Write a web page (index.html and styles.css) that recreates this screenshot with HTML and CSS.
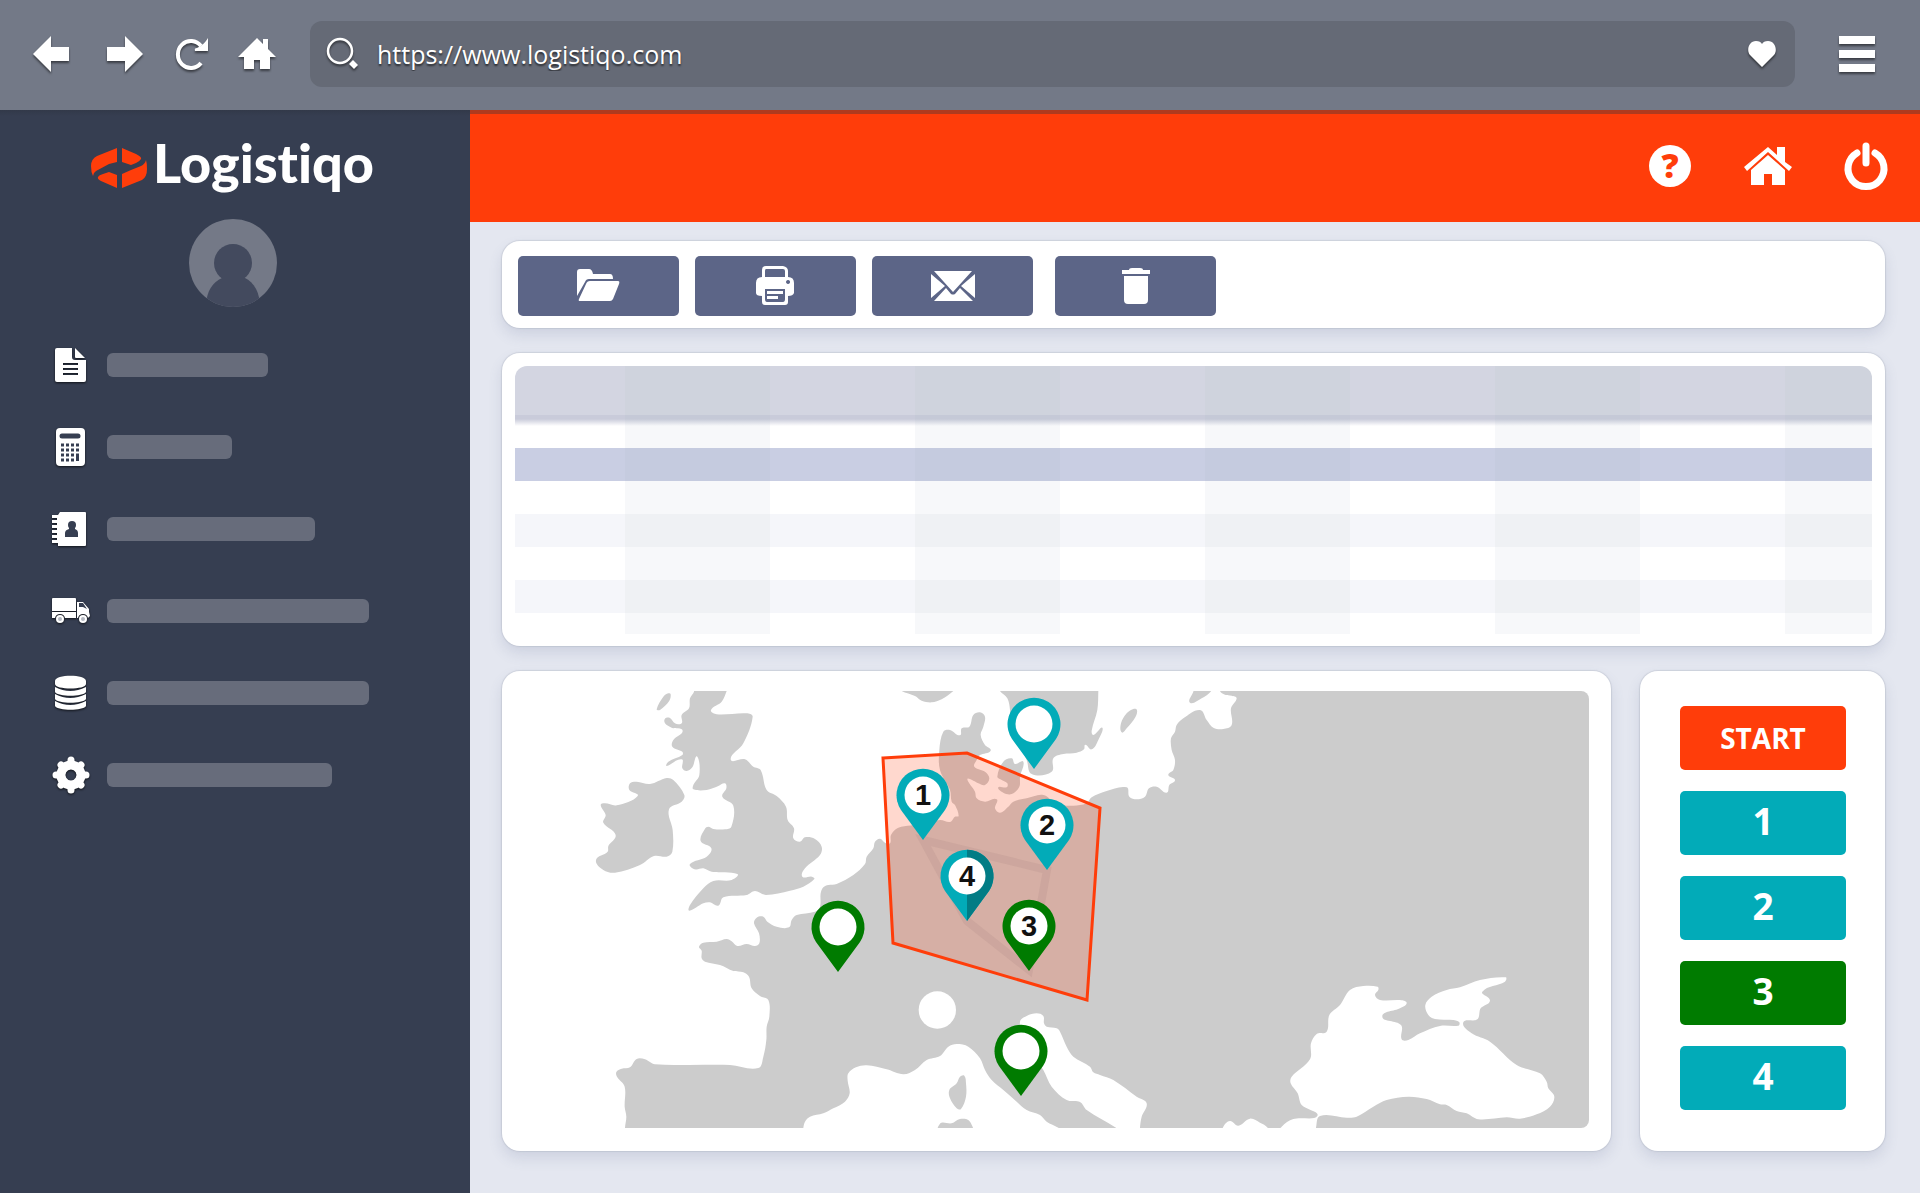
FILE: index.html
```
<!DOCTYPE html>
<html lang="en">
<head>
    <meta charset="UTF-8">
    <meta name="viewport" content="width=device-width, initial-scale=1.0">
    <title>Logistiqo</title>
    <link rel="stylesheet" href="styles.css">
</head>
<body>
    <header class="browser">
        <button class="browser-btn" aria-label="Back"><svg width="36" height="36" viewBox="0 0 36 36"><path d="M0 18L18 0V11H36V25H18V36Z"/></svg></button>
        <button class="browser-btn forward" aria-label="Forward"><svg width="36" height="36" viewBox="0 0 36 36"><path d="M36 18L18 0V11H0V25H18V36Z"/></svg></button>
        <button class="browser-btn" aria-label="Reload"><svg width="32" height="32" viewBox="0 0 32 32"><path d="M25 25A13 13.500 0 1 1 25 8" fill="none" stroke="#fff" stroke-width="4"/><path d="M32 0V13H19Q18 10 21 10Q28 7 32 0Z"/></svg></button>
        <button class="browser-btn start-page" aria-label="Start page"><svg width="38" height="32" viewBox="0 0 38 32"><path d="M19 0L25 6V1H30V11L38 19H32V31H22V22H16V31H6V19H0Z"/></svg></button>
        <form class="address">
            <svg width="32" height="32" viewBox="0 0 32 32"><circle cx="13" cy="13" r="12" fill="none" stroke="#fff" stroke-width="2.500"/><path d="M22 26L26 22L31 27L27 31Z"/></svg>
            <input type="text" name="url" aria-label="Address" value="https://www.logistiqo.com">
            <button class="browser-btn" type="button" aria-label="Favourite"><svg width="28" height="26" viewBox="0 0 28 26"><path d="M14 26L2 14C-2 9 1 0 8 0C11 0 13 1 14 3C15 1 17 0 20 0C27 0 30 9 26 14Z"/></svg></button>
        </form>
        <button class="browser-btn" aria-label="Menu"><svg width="36" height="36" viewBox="0 0 36 36"><path d="M0 0H36V8H0ZM0 14H36V22H0ZM0 28H36V36H0Z"/></svg></button>
    </header>

    <div class="app">
        <aside class="sidebar">
            <a class="logo" href="#">
                <svg width="56" height="40" viewBox="0 0 56 40">
                    <path d="M26 0V14L18 16L5 23Q2 25 2 28Q0 24 0 18Q0 11 6 8Z"/>
                    <path d="M31 0L45 6Q51 9 50 11Q49 13 45 15L40 17L31 14Z"/>
                    <path d="M26 40L10 33Q6 31 7 29Q8 27 12 26L18 24L26 27Z"/>
                    <path d="M31 40V26L40 22L50 18Q54 16 55 12Q56 15 56 21Q56 29 51 32Z"/>
                </svg>
                <span>Logistiqo</span>
            </a>
            <svg class="avatar" width="88" height="88" viewBox="0 0 88 88">
                <clipPath id="round"><circle cx="44" cy="44" r="44"/></clipPath>
                <g clip-path="url(#round)">
                    <path fill="#747987" d="M0 0H88V88H0Z"/>
                    <circle cx="44" cy="44" r="19"/>
                    <path d="M17 88C17 72 24 63 33 59H56C64 63 71 72 71 88Z"/>
                </g>
            </svg>
            <nav class="nav">
                <a href="#" aria-label="Documents">
                    <svg width="38" height="40" viewBox="0 0 38 40"><path fill-rule="evenodd" d="M5 3H20V12Q20 15 23 15H34V35Q34 37 32 37H5Q3 37 3 35V5Q3 3 5 3ZM11 18V20H26V18ZM11 23V25H26V23ZM11 28V30H26V28Z"/><path d="M23 3L33 13H24Q23 13 23 12Z"/></svg>
                    <span class="bar w161"></span>
                </a>
                <a href="#" aria-label="Accounting">
                    <svg width="38" height="40" viewBox="0 0 38 40"><rect x="4" y="1" width="29" height="38" rx="4"/><path stroke="#363e51" stroke-width="5" stroke-linecap="round" d="M10 9H26"/><path stroke="#363e51" stroke-width="3" stroke-dasharray="3 2" d="M9 18H28M9 23H28M9 28H28M9 33H23"/><path stroke="#363e51" stroke-width="3" d="M25.500 27V34"/></svg>
                    <span class="bar w125"></span>
                </a>
                <a href="#" aria-label="Contacts">
                    <svg width="38" height="40" viewBox="0 0 38 40"><path d="M8 3H33Q34 3 34 4V36Q34 37 33 37H6V34H0V31H5V29H0V26H5V24H0V21H5V19H0V16H5V14H0V11H5V9H0V6H6Z"/><g fill="#363e51"><circle cx="20" cy="16" r="4"/><path d="M13 28V24Q13 21 17 20V18H23V20Q26 21 26 24V28Z"/></g></svg>
                    <span class="bar w208"></span>
                </a>
                <a href="#" aria-label="Transport">
                    <svg width="38" height="40" viewBox="0 0 38 40"><path d="M1 7H23Q24 7 24 8V20H0V8Q0 7 1 7ZM0 21H24V27H13Q12 23 8 23Q4 23 3 27H0ZM25 11H31L37 18V21L38 25L36 27Q35 23 31 23Q27 23 26 27H25Z"/><path fill="#363e51" d="M27 12H31L35 18L31 16H27Z"/><circle cx="8" cy="28" r="4"/><circle cx="31" cy="28" r="4"/><g fill="#b5b9c2"><circle cx="8" cy="28" r="2"/><circle cx="31" cy="28" r="2"/></g></svg>
                    <span class="bar w262"></span>
                </a>
                <a href="#" aria-label="Database">
                    <svg width="38" height="40" viewBox="0 0 38 40"><path d="M3 8C3 1 34 1 34 8V11C34 17 3 17 3 11ZM3 14Q18 22 34 14V19C31 24 6 24 3 19ZM3 21Q18 29 34 21V26C31 31 6 31 3 26ZM3 28Q18 36 34 28V33C31 38 6 38 3 33Z"/></svg>
                    <span class="bar w262"></span>
                </a>
                <a href="#" aria-label="Settings">
                    <svg width="38" height="40" viewBox="0 0 38 40"><path fill="none" stroke="#fff" stroke-width="9" d="M19 10A10 10 0 1 1 18.900 10Z"/><path stroke="#fff" stroke-width="7" stroke-linecap="round" d="M19 5V8M19 32V35M4 20H7M31 20H34M9 10L11 12M27 28L29 30M9 30L11 28M27 12L29 10"/></svg>
                    <span class="bar w225"></span>
                </a>
            </nav>
        </aside>

        <div class="content">
            <header class="topbar">
                <button aria-label="Help"><svg width="44" height="46" viewBox="0 0 44 46"><circle cx="22" cy="23" r="21"/><text class="help-mark" x="22" y="35" text-anchor="middle">?</text></svg></button>
                <button aria-label="Home"><svg width="48" height="46" viewBox="0 0 48 46"><path d="M24 4L33 12V4H41V19L48 24L45 28L24 9L3 28L0 24Z"/><path d="M24 12L41 27V42H28V31H20V42H7V27Z"/></svg></button>
                <button aria-label="Log out"><svg width="44" height="46" viewBox="0 0 44 46"><path fill="none" stroke="#fff" stroke-width="7" stroke-linecap="round" d="M13 10A18 18 0 1 0 31 10M22 3V20"/></svg></button>
            </header>

            <main class="main">
                <div class="card toolbar">
                    <button aria-label="Open"><svg width="44" height="40" viewBox="0 0 44 40"><path d="M0 30V6Q0 3 3 3H12Q15 3 16 8H33Q36 8 36 13H12Q9 13 8 16Z"/><path d="M13 15H41Q43 15 42 18L36 33Q35 35 33 35H3Q1 35 2 33L9 18Q10 15 13 15Z"/></svg></button>
                    <button aria-label="Print"><svg width="44" height="40" viewBox="0 0 44 40"><path fill-rule="evenodd" d="M12 0H29Q34 1 34 5V11Q40 11 40 17V27Q39 30 34 30V36Q34 39 31 39H11Q8 39 8 36V30Q2 30 2 27V17Q2 11 8 11V4Q8 0 12 0ZM12 3Q11 3 11 5V11H31V5Q31 3 29 3ZM11 23V33Q11 36 13 36H29Q31 36 31 33V23ZM34 14A2 2 0 1 0 34.100 14Z"/><path d="M13 25H29V28H13ZM13 30H24V33H13Z"/></svg></button>
                    <button aria-label="Send"><svg width="44" height="40" viewBox="0 0 44 40"><path d="M3 5H41L22 26ZM0 8L14 20L0 32ZM44 8L30 20L44 32ZM3 35L15 22L20 28Q22 29 24 28L29 22L42 35Z"/></svg></button>
                    <button class="delete" aria-label="Delete"><svg width="44" height="40" viewBox="0 0 44 40"><path d="M8 4H15Q15 2 18 2H26Q29 2 29 4H36V8H8ZM10 10H34V34Q34 38 30 38H14Q10 38 10 34Z"/></svg></button>
                </div>

                <div class="card table-card">
                    <table class="grid">
                        <colgroup>
                            <col class="first"><col><col><col><col><col><col><col><col><col class="last">
                        </colgroup>
                        <thead>
                            <tr><th></th><th></th><th></th><th></th><th></th><th></th><th></th><th></th><th></th><th></th></tr>
                        </thead>
                        <tbody>
                            <tr class="under-head"><td></td><td></td><td></td><td></td><td></td><td></td><td></td><td></td><td></td><td></td></tr>
                            <tr class="selected"><td></td><td></td><td></td><td></td><td></td><td></td><td></td><td></td><td></td><td></td></tr>
                            <tr><td></td><td></td><td></td><td></td><td></td><td></td><td></td><td></td><td></td><td></td></tr>
                            <tr class="odd"><td></td><td></td><td></td><td></td><td></td><td></td><td></td><td></td><td></td><td></td></tr>
                            <tr><td></td><td></td><td></td><td></td><td></td><td></td><td></td><td></td><td></td><td></td></tr>
                            <tr class="odd"><td></td><td></td><td></td><td></td><td></td><td></td><td></td><td></td><td></td><td></td></tr>
                            <tr class="short"><td></td><td></td><td></td><td></td><td></td><td></td><td></td><td></td><td></td><td></td></tr>
                        </tbody>
                    </table>
                </div>

                <div class="planner">
                    <div class="card map-card">
                        <svg class="map" viewBox="0 0 1067 437">
                            <defs>
                                <path id="pin" d="M0 0L-22 -30A26.500 26.500 0 1 1 22 -30Z"/>
                            </defs>
                            <g id="coast" transform="translate(-32 -31) scale(.33333)"></g>
                            <polygon class="zone" points="361,67 445,62 578,117 565,309 371,252"/>
                            <polygon class="route" points="401,149 525,179 507,279 445,230"/>
                            <g class="pin teal" transform="translate(512 78)"><use href="#pin"/><circle cy="-45" r="18.500"/></g>
                            <g class="pin green" transform="translate(316 281)"><use href="#pin"/><circle cy="-45" r="18.500"/></g>
                            <g class="pin green" transform="translate(499 405)"><use href="#pin"/><circle cy="-45" r="18.500"/></g>
                            <g class="pin teal" transform="translate(401 149)"><use href="#pin"/><circle cy="-45" r="18.500"/><text y="-35">1</text></g>
                            <g class="pin teal" transform="translate(525 179)"><use href="#pin"/><circle cy="-45" r="18.500"/><text y="-35">2</text></g>
                            <g class="pin green" transform="translate(507 280)"><use href="#pin"/><circle cy="-45" r="18.500"/><text y="-35">3</text></g>
                            <g class="pin teal" transform="translate(445 230)"><use href="#pin"/><path class="half" d="M0 0L22 -30A26.500 26.500 0 0 0 0 -71.300Z"/><circle cy="-45" r="18.500"/><text y="-35">4</text></g>
                        </svg>
                    </div>
                    <div class="card stops">
                        <button class="start">START</button>
                        <button>1</button>
                        <button>2</button>
                        <button class="done">3</button>
                        <button>4</button>
                    </div>
                </div>
            </main>
        </div>
    </div>
    <script src="map.js"></script>
</body>
</html>
```
FILE: map.js
```
// coastlines as x,y points, dx shifts a shape to the east
const shapes = [
    // mainland
    {dx: 0, points: '405,1440 405,1403 409,1370 404,1340 404,1280 382,1252 379,1236 395,1226 420,1222 440,1197 465,1198 495,1213 650,1214 720,1215 805,1224 820,1190 829,1140 830,1100 838,1070 835,1020 810,1008 785,985 777,950 760,937 730,933 690,915 645,905 635,895 635,872 627,860 640,848 680,845 710,837 725,844 742,858 770,852 795,858 808,850 807,820 792,790 800,773 820,770 832,785 860,800 897,802 905,780 920,765 975,755 990,740 992,700 1000,682 1015,675 1040,672 1090,645 1125,612 1130,590 1150,565 1155,545 1170,536 1185,548 1200,550 1203,525 1225,503 1300,492 1350,480 1380,486 1395,470 1406,468 1395,435 1385,425 1380,390 1350,330 1348,270 1360,215 1380,210 1410,226 1415,205 1438,200 1450,165 1470,157 1485,170 1480,200 1472,225 1485,255 1502,272 1470,285 1460,300 1453,320 1485,335 1498,355 1485,375 1465,370 1450,362 1432,358 1455,395 1460,415 1485,425 1520,418 1515,445 1530,458 1555,440 1570,425 1610,415 1660,405 1700,432 1750,437 1790,430 1805,412 1850,393 1910,382 1918,410 1940,418 1965,410 1977,385 2000,380 2030,398 2038,375 2055,360 2035,345 2050,330 2055,300 2045,270 2043,235 2055,215 2060,195 2080,175 2130,150 2150,180 2170,203 2200,207 2225,195 2223,145 2240,115 2225,107 2205,104 2190,93 2190,50 3400,50 3400,1440 1950,1440 1950,1403 1955,1370 1970,1330 1940,1310 1870,1260 1830,1245 1810,1237 1800,1220 1750,1190 1730,1160 1710,1115 1700,1105 1670,1100 1662,1090 1660,1068 1640,1060 1610,1068 1590,1085 1600,1140 1660,1230 1685,1280 1730,1320 1770,1326 1790,1350 1878,1403 1930,1440 1760,1440 1705,1403 1670,1385 1650,1365 1610,1350 1580,1325 1540,1290 1505,1260 1485,1230 1470,1195 1435,1160 1400,1152 1375,1160 1350,1188 1310,1200 1275,1230 1240,1243 1190,1228 1130,1216 1098,1222 1075,1240 1073,1262 1079,1300 1065,1325 1030,1345 1000,1360 960,1370 945,1385 940,1403 935,1440'},
    // Great Britain
    {dx: 0, points: '612,80 612,95 600,115 597,145 575,165 575,190 555,190 540,174 525,176 525,190 545,203 578,212 550,240 547,260 577,275 577,285 535,305 530,318 575,298 577,325 590,333 607,322 622,290 628,345 610,375 610,388 650,390 685,378 705,370 709,385 697,410 730,437 724,500 705,508 670,507 655,500 645,506 632,543 664,565 650,590 600,612 615,628 640,625 665,635 742,642 725,660 670,663 640,685 600,735 598,752 640,730 660,727 685,737 700,712 770,705 795,693 828,705 900,692 940,680 973,657 965,650 937,650 945,625 990,585 995,560 975,537 945,532 930,545 910,535 912,505 893,480 888,440 860,408 830,390 812,330 790,320 765,298 722,298 760,250 788,170 770,160 680,163 663,150 695,125 710,93 712,80'},
    // Ireland
    {dx: 0, points: '530,354 550,360 583,405 575,425 537,448 548,510 547,575 530,590 492,588 450,615 375,638 340,630 318,600 353,575 355,558 377,525 340,488 347,465 332,435 345,430 380,436 443,408 418,390 420,370 440,365 480,372'},
    {dx: 0, points: '542,103 538,122 510,150 500,148 520,110 535,100'},
    // Norway, Sweden, Finland and the islands
    {dx: 1110, points: '100,70 125,93 165,108 185,122 215,127 245,118 280,93 300,70'},
    {dx: 1110, points: '410,70 420,93 442,115 450,150 450,200 500,300 515,342 575,335 580,295 610,282 650,278 672,268 676,254 695,268 715,240 727,203 700,225 695,212 712,150 715,93 715,70'},
    {dx: 1110, points: '785,217 783,190 800,160 820,147 831,150 826,172 800,205'},
    {dx: 1110, points: '1005,80 1000,95 990,128 1025,115 1052,95 1060,80'},
    {dx: 1110, points: '412,350 430,305 455,295 465,312 490,305 480,350 478,380 455,402 430,398 415,382 440,382 442,370 425,360'},
    // Corsica and Sardinia
    {dx: 1110, points: '313,1247 318,1270 318,1310 303,1347 290,1345 270,1315 268,1290 290,1270 300,1250'},
    {dx: 1110, points: '238,1430 240,1391 275,1390 300,1377 330,1385 335,1430'},
    // Black Sea and Sea of Azov
    {dx: 2250, sea: true, points: '413,980 415,990 405,1005 420,1020 485,1021 500,1030 480,1045 427,1070 483,1095 485,1138 505,1140 540,1120 600,1098 655,1097 658,1087 640,1080 585,1077 565,1065 556,1035 575,1010 620,990 660,982 720,960 797,952 795,965 727,995 750,1022 722,1045 712,1078 670,1087 695,1120 750,1145 830,1215 900,1240 920,1265 925,1285 943,1310 930,1340 890,1363 840,1376 800,1372 715,1378 680,1360 650,1353 620,1335 600,1333 560,1317 505,1310 440,1320 400,1340 350,1370 320,1373 240,1368 228,1403 220,1440 100,1440 125,1400 160,1377 232,1368 185,1335 173,1300 152,1270 155,1250 210,1198 213,1150 230,1122 260,1115 268,1065 300,1035 330,990 370,978'},
    // Aegean
    {dx: 2250, sea: true, points: '-60,1440 -50,1400 -30,1383 -5,1397 30,1376 60,1388 83,1403 100,1440'}
];

// runs a closed curve through every point
function smooth(text) {
    const p = text.split(' ').map(s => s.split(',').map(Number));
    const n = p.length;
    let d = `M${p[0]}`;
    for (let i = 0; i < n; i++) {
        const a = p[(i + n - 1) % n], b = p[i], c = p[(i + 1) % n], e = p[(i + 2) % n];
        const len = Math.hypot(c[0] - b[0], c[1] - b[1]);
        const t1 = Math.min(1, len / (Math.hypot(c[0] - a[0], c[1] - a[1]) || 1)) / 3;
        const t2 = Math.min(1, len / (Math.hypot(e[0] - b[0], e[1] - b[1]) || 1)) / 3;
        d += `C${b[0] + (c[0] - a[0]) * t1},${b[1] + (c[1] - a[1]) * t1} ${c[0] - (e[0] - b[0]) * t2},${c[1] - (e[1] - b[1]) * t2} ${c}`;
    }
    return d + 'Z';
}

const coast = document.querySelector('#coast');
function add(name, attrs) {
    const el = document.createElementNS('http://www.w3.org/2000/svg', name);
    for (const key in attrs) {
        el.setAttribute(key, attrs[key]);
    }
    coast.appendChild(el);
}
for (const shape of shapes) {
    add('path', {
        d: smooth(shape.points),
        class: shape.sea ? 'sea' : 'land',
        transform: `translate(${shape.dx})`
    });
}
// spot left free in the Alps
add('circle', {cx: 1342, cy: 1050, r: 56, class: 'sea'});
```
FILE: styles.css
```
* {
    box-sizing: border-box;
}
body {
    margin: 0;
    min-height: 100vh;
    display: flex;
    flex-direction: column;
    font-family: "Open Sans", "Noto Sans", sans-serif;
    background: #e4e7f0;
}
button {
    border: 0;
    padding: 0;
    background: none;
    color: #fff;
    font-family: inherit;
    font-weight: bold;
    cursor: pointer;
}
svg {
    display: block;
    fill: #fff;
}

/* browser bar */
.browser {
    height: 110px;
    padding: 0 45px 2px 33px;
    display: flex;
    align-items: center;
    gap: 36px;
    background: #737987;
}
.browser svg {
    overflow: visible;
    filter: drop-shadow(0 2px 1px rgba(0, 0, 0, .5));
}
.browser .forward {
    margin: 0 -3px 0 2px;
}
.browser .start-page {
    margin: 0 -2px 0 -6px;
}
.address {
    flex: 1;
    height: 66px;
    margin-right: 8px;
    padding: 0 19px 0 17px;
    display: flex;
    align-items: center;
    gap: 18px;
    border-radius: 12px;
    background: #656a76;
}
.address input {
    flex: 1;
    padding: 0;
    border: 0;
    outline: none;
    background: none;
    color: #fff;
    font-family: inherit;
    font-size: 25px;
    text-shadow: 0 2px 2px rgba(0, 0, 0, .6);
}

.app {
    flex: 1;
    display: flex;
}

/* sidebar */
.sidebar {
    width: 470px;
    padding-top: 25px;
    background: linear-gradient(#323949, #363e51 6px);
}
.logo {
    height: 84px;
    padding-left: 91px;
    display: flex;
    gap: 6px;
    color: #fff;
    font-family: Lato, sans-serif;
    font-size: 54px;
    font-weight: 900;
    font-variant-ligatures: none;
    line-height: 56px;
    text-decoration: none;
}
.logo svg {
    margin-top: 13px;
    fill: #ff3d0a;
}
.avatar {
    margin-left: 189px;
    fill: #434a5e;
}
.nav {
    padding: 38px 0 0 52px;
    display: flex;
    flex-direction: column;
    gap: 42px;
}
.nav a {
    display: flex;
    align-items: center;
    gap: 17px;
}
.nav svg {
    filter: drop-shadow(0 1px 1px rgba(0, 0, 0, .7));
}
.bar {
    height: 24px;
    border-radius: 6px;
    background: #676c7b;
}
.w125 { width: 125px; }
.w161 { width: 161px; }
.w208 { width: 208px; }
.w225 { width: 225px; }
.w262 { width: 262px; }

/* top bar */
.content {
    flex: 1;
    display: flex;
    flex-direction: column;
}
.topbar {
    height: 112px;
    padding: 0 32px 4px 0;
    display: flex;
    align-items: center;
    justify-content: flex-end;
    gap: 52px;
    border-top: 4px solid #b03a1e;
    background: #ff3d0a;
}
.topbar svg {
    overflow: visible;
}
.help-mark {
    fill: #ff3d0a;
    font-size: 34px;
    font-weight: 800;
}

.main {
    flex: 1;
    padding: 19px 35px 42px 32px;
    display: flex;
    flex-direction: column;
    gap: 25px;
}
.card {
    border-radius: 18px;
    background: #fff;
    box-shadow: 0 0 1px 1px rgba(160, 165, 180, .3), 0 7px 14px rgba(90, 100, 140, .16);
}
.toolbar {
    height: 87px;
    padding: 15px 16px 12px;
    display: flex;
    gap: 16px;
}
.toolbar button {
    width: 161px;
    height: 60px;
    display: flex;
    align-items: center;
    justify-content: center;
    border-radius: 5px;
    background: #5c6587;
}
.toolbar .delete {
    margin-left: 6px;
}

.table-card {
    padding: 13px 13px 12px;
}
.grid {
    width: 100%;
    table-layout: fixed;
    border-collapse: collapse;
}
.grid th, .grid td {
    padding: 0;
}
.grid .first {
    width: 110px;
}
.grid .last {
    width: 87px;
}
.grid thead {
    height: 49px;
}
.grid th {
    background: #d3d5e1;
}
.grid th:first-child {
    border-top-left-radius: 12px;
}
.grid th:last-child {
    border-top-right-radius: 12px;
}
.grid th:nth-child(even) {
    background: #cfd3dd;
}
.grid tbody tr {
    height: 33px;
}
.grid tbody .short {
    height: 21px;
}
.grid td:nth-child(even) {
    background: #f7f8fa;
}
.grid .odd td {
    background: #f5f6fa;
}
.grid .odd td:nth-child(even) {
    background: #eff1f4;
}
.grid .selected td {
    background: #c9cee3;
}
.grid .selected td:nth-child(even) {
    background: #c5cbdf;
}
.grid .under-head td {
    background: linear-gradient(#c9cbda 4px, #fff 11px);
}
.grid .under-head td:nth-child(even) {
    background: linear-gradient(#c5c9d7 4px, #f7f8fa 11px);
}

/* map */
.planner {
    flex: 1;
    display: grid;
    grid-template-columns: 1fr 245px;
    gap: 29px;
}
.map-card {
    padding: 20px 22px 23px 20px;
}
.map {
    width: 100%;
    border-radius: 8px;
}
.land {
    fill: #ccc;
}
.sea {
    fill: #fff;
}
.zone {
    fill: rgba(255, 61, 10, .2);
    stroke: #ff3d0a;
    stroke-width: 3px;
}
.route {
    fill: none;
    stroke: rgba(140, 110, 105, .12);
    stroke-width: 8px;
}
.pin circle {
    fill: #fff;
}
.pin text {
    fill: #111;
    font-family: "Liberation Sans", Arial, sans-serif;
    font-size: 29px;
    font-weight: bold;
    text-anchor: middle;
}
.teal { fill: #02abb8; }
.green { fill: #007b00; }
.half { fill: #027c85; }

.stops {
    padding: 35px 39px 35px 40px;
    display: flex;
    flex-direction: column;
    gap: 21px;
}
.stops button {
    height: 64px;
    padding-bottom: 4px;
    border-radius: 5px;
    background: #02abb8;
    font-size: 37px;
    line-height: 60px;
}
.stops .start {
    padding: 0;
    background: #ff3d0a;
    font-size: 28px;
}
.stops .done {
    background: #007b00;
}
```
